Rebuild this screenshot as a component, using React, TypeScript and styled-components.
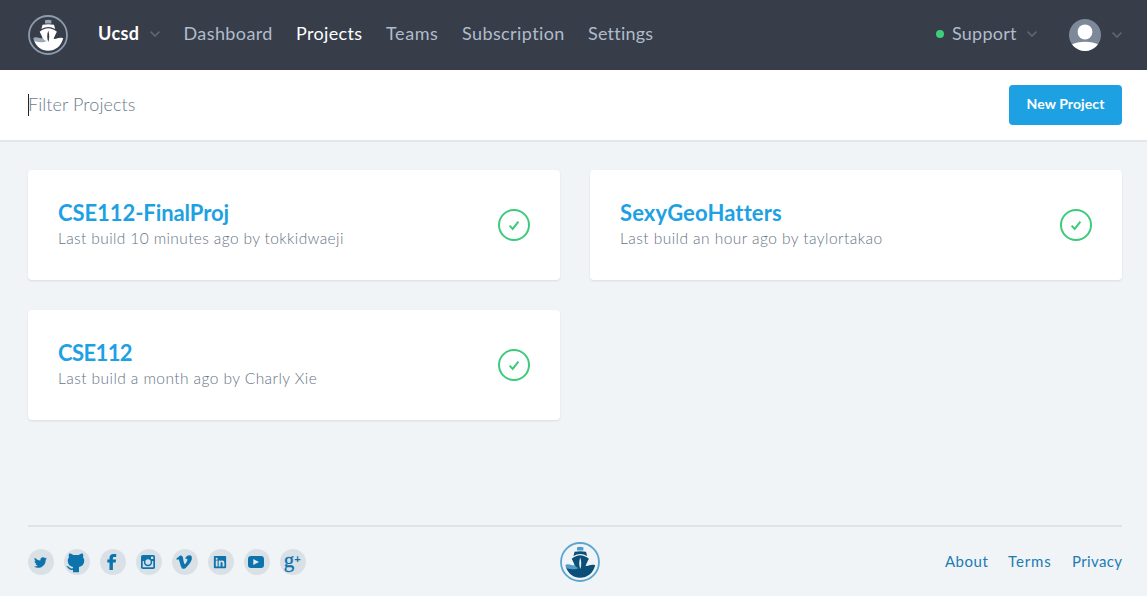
import React from "react";
import styled, { createGlobalStyle } from "styled-components";
import { FaTwitter, FaVimeoV, FaLinkedin } from "react-icons/fa";

const GlobalStyle = createGlobalStyle`
  *, *::before, *::after { box-sizing: border-box; }
  body {
    margin: 0;
    background: #f0f4f7;
    font-family: Lato, "Open Sans", sans-serif;
    -webkit-font-smoothing: antialiased;
  }
`;

const Page = styled.div`
  height: 596px;
  display: flex;
  flex-direction: column;
`;

const Header = styled.header`
  height: 70px;
  flex: none;
  display: flex;
  align-items: center;
  padding: 0 25px 0 28px;
  background: #373d49;
`;

const Nav = styled.nav`
  display: flex;
  align-items: center;
  gap: 24px;
  margin-left: 30px;
  padding-bottom: 2px;
`;

const NavItem = styled.a<{ $w: number; $track?: number; $tone?: "bold" | "active" }>`
  width: ${(p) => p.$w}px;
  padding-bottom: 2px;
  white-space: nowrap;
  font-size: 18px;
  line-height: 24px;
  letter-spacing: ${(p) => p.$track ?? 0}px;
  font-weight: ${(p) => (p.$tone === "bold" ? 700 : 400)};
  color: ${(p) => (p.$tone ? "#ffffff" : "#b0bccb")};
`;

const Menu = styled.div`
  display: flex;
  align-items: center;
  gap: 10px;
`;

const Account = styled.div`
  display: flex;
  align-items: center;
  margin-left: auto;
  gap: 32px;
`;

const SupportMenu = styled(Menu)`
  padding-bottom: 2px;
`;

const AvatarMenu = styled(Menu)`
  gap: 11px;
`;

const StatusDot = styled.span`
  width: 8px;
  height: 8px;
  margin-right: -2px;
  border-radius: 50%;
  background: #3dce7c;
`;

const FilterBar = styled.section`
  height: 72px;
  flex: none;
  display: flex;
  align-items: center;
  justify-content: space-between;
  padding: 0 25px 0 28px;
  background: #ffffff;
  border-bottom: 2px solid #e3e5e7;
`;

const FilterField = styled.div`
  height: 22px;
  border-left: 1px solid #20242c;
  font-size: 18px;
  line-height: 21px;
  font-weight: 300;
  letter-spacing: 0.08px;
  text-indent: -1px;
  color: #6c7a8c;
`;

const PrimaryButton = styled.button`
  width: 113px;
  height: 40px;
  padding: 0 0 2px;
  border: 0;
  border-radius: 4px;
  background: #1ea1e3;
  color: #ffffff;
  font: 700 14px/20px Lato, sans-serif;
  letter-spacing: 0.1px;
`;

const Grid = styled.main`
  flex: 1;
  display: grid;
  grid-template-columns: 532px 532px;
  grid-auto-rows: 110px;
  gap: 30px;
  padding: 28px 25px 0 28px;
`;

const Card = styled.article`
  display: flex;
  align-items: center;
  justify-content: space-between;
  padding: 0 30px;
  border-radius: 4px;
  background: #ffffff;
  box-shadow: 0 1px 2px rgba(40, 60, 80, 0.12);
`;

const Title = styled.h2<{ $track: number }>`
  margin: 2px 0 0;
  font-size: 22px;
  line-height: 28px;
  font-weight: 700;
  letter-spacing: ${(p) => p.$track}px;
  color: #1ea1e3;
`;

const Meta = styled.p<{ $track: number }>`
  margin: -1px 0 3px;
  font-size: 15.5px;
  line-height: 24px;
  font-weight: 300;
  letter-spacing: ${(p) => p.$track}px;
  color: #667486;
`;

const Footer = styled.footer`
  height: 71px;
  flex: none;
  display: grid;
  grid-template-columns: 532px 40px 1fr;
  align-items: center;
  margin: 0 25px 0 28px;
  border-top: 2px solid #dce3e9;
`;

const SocialList = styled.div`
  display: flex;
  gap: 10px;
  margin-bottom: -1px;
`;

const SocialLink = styled.a`
  width: 26px;
  height: 26px;
  display: flex;
  align-items: center;
  justify-content: center;
  padding-right: 1.5px;
  border-radius: 50%;
  background: #d9e1e7;
  color: #0d73ad;
`;

const GooglePlus = styled.span`
  display: flex;
  font: 21px/20px "Liberation Serif", serif;
  padding-bottom: 5px;
  -webkit-text-stroke: 0.3px currentColor;
  sup {
    font: 700 11px/10px "Liberation Sans", sans-serif;
    margin-top: 4px;
    -webkit-text-stroke: 0;
  }
`;

const FooterLinks = styled.div`
  display: flex;
  justify-content: flex-end;
  gap: 20px;
  padding-bottom: 2px;
`;

const FooterLink = styled.a<{ $w: number; $track: number }>`
  width: ${(p) => p.$w}px;
  white-space: nowrap;
  font-size: 15px;
  line-height: 20px;
  letter-spacing: ${(p) => p.$track}px;
  color: #1c7cb2;
`;

const Chevron = () => (
  <svg width="10" height="6" viewBox="0 0 10 6" fill="none" stroke="#5d6673" strokeWidth="1.7">
    <path d="M.6.6 5 5 9.4.6" />
  </svg>
);

type LogoProps = { ring: string; back: string; hull: string; wave: string; inner: string };

const Logo = ({ ring, back, hull, wave, inner }: LogoProps) => (
  <svg width="40" height="40" viewBox="0 0 40 40">
    <circle cx="20" cy="20" r="19" fill={inner} stroke={ring} strokeWidth="1.8" />
    <path d="M17 5.2q3.200-.8 6.400 0v3.400H17z" fill={wave} />
    <path d="M14.600 9.800q5.700-1.300 11.400 0l1.200 4.200q-6.900-3.900-13.800 0z" fill={hull} />
    <path d="M20.200 13.200c3 0 6 1.400 8.700 3.500-1.300 2.600-2.300 4.600-3.300 7.200 3.200.6 4.800-2 9.600-.7C33.200 31 27.500 35.700 20 35.700c-6.500 0-11.300-3.700-13.700-9.700 3.600.3 6.500.2 8.700-1.600-.8-2.800-1.900-5.100-3.300-7.700 2.700-2.100 5.500-3.500 8.500-3.500z" fill={hull} />
    <path d="M5.300 22.900c3.400-1.800 6 .9 9.700.4 1 1.800 2.400 2.400 3.900 2.700-4.200 2.400-8.700.8-12.700.3z" fill={wave} />
    <path d="M20.300 15.400c1.300 3.600 1.200 8.400 0 11.600-1.400-3.600-1.500-7.800 0-11.600z" fill={back} />
  </svg>
);

const StatusOk = () => (
  <svg width="32" height="32" viewBox="0 0 32 32" fill="none" stroke="#3dcb7b" strokeWidth="2">
    <circle cx="16" cy="16" r="15" />
    <path d="m11.600 16.600 3.100 3.300 5.700-7.300" />
  </svg>
);

const Avatar = () => (
  <svg width="32" height="32" viewBox="0 0 32 32">
    <defs>
      <clipPath id="avatar-round">
        <circle cx="16" cy="16" r="16" />
      </clipPath>
    </defs>
    <g clipPath="url(#avatar-round)">
      <rect width="32" height="32" fill="#7d8998" />
      <ellipse cx="16" cy="12.900" rx="7.400" ry="7.500" fill="#fff" />
      <path d="M2 26q6-3.200 14-3.200T30 26v6H2z" fill="#fff" />
    </g>
  </svg>
);

const Octocat = () => (
  <svg width="20" height="24" viewBox="0 -3 20 24" fill="currentColor">
    <path d="M3.200.6c1.600 0 3 .6 4.200 1.500 1.700-.3 3.500-.3 5.200 0C13.800 1.200 15.200.6 16.800.6c.6 1.300.6 2.500.2 3.700 1 1.200 1.400 2.500 1.200 4.300-.3 3.200-2.200 4.800-5.200 5.300v5.300H7v-2.400c-2.600.6-4.100-.4-5-2l-1.400-1 .3-.8c2.600.3 2.500 2.400 4.600 2.400l1.500-.2v-1.300c-3-.5-4.900-2.100-5.200-5.300-.2-1.800.2-3.100 1.200-4.300C2.600 3.100 2.600 1.900 3.200.6z" />
  </svg>
);

const Facebook = () => (
  <svg width="11" height="16" viewBox="0 0 11 16" fill="currentColor">
    <path d="M2.500 16V8.600H.3V5.500h2.200V4C2.500 1.300 4 0 6.500 0h2.700v3H7.500C6.300 3 5.900 3.500 5.900 4.400v1.100h3.200l-.4 3.100H5.900V16z" />
  </svg>
);

const Instagram = () => (
  <svg width="14" height="14" viewBox="0 0 14 14">
    <rect width="14" height="14" rx="1.800" fill="currentColor" />
    <path d="M1.700 6v6.200h10.600V6h-1.400a4 4 0 1 1-7.800 0z" fill="#d9e1e7" />
    <circle cx="7" cy="7" r="4.200" fill="currentColor" />
    <rect x="10" y="1.700" width="2.300" height="2.300" fill="#d9e1e7" />
    <circle cx="7" cy="7" r="2.700" fill="#d9e1e7" />
  </svg>
);

const YouTube = () => (
  <svg width="16" height="12" viewBox="0 0 16 12">
    <rect width="16" height="12" rx="3" fill="currentColor" />
    <path d="m5.300 3.100 5.700 2.900-5.700 2.900z" fill="#e4ebef" />
  </svg>
);

const navigation = [
  { label: "Dashboard", w: 88.5, track: 0.4 },
  { label: "Projects", w: 66, track: 0.35, active: true },
  { label: "Teams", w: 52, track: 0.6 },
  { label: "Subscription", w: 102, track: 0.4 },
  { label: "Settings", w: 66, track: 0.22 },
];

const projects = [
  { name: "CSE112-FinalProj", track: -0.07, meta: "Last build 10 minutes ago by tokkidwaeji", metaTrack: 0.38 },
  { name: "SexyGeoHatters", track: 0.12, meta: "Last build an hour ago by taylortakao", metaTrack: 0.45 },
  { name: "CSE112", track: -0.6, meta: "Last build a month ago by Charly Xie", metaTrack: 0.43 },
];

const social = [
  { name: "Twitter", icon: <FaTwitter size={13} /> },
  { name: "GitHub", icon: <Octocat /> },
  { name: "Facebook", icon: <Facebook /> },
  { name: "Instagram", icon: <Instagram /> },
  { name: "Vimeo", icon: <FaVimeoV size={18} /> },
  { name: "LinkedIn", icon: <FaLinkedin size={14} /> },
  { name: "YouTube", icon: <YouTube /> },
  { name: "Google Plus", icon: <GooglePlus>g<sup>+</sup></GooglePlus> },
];

export default function App() {
  return (
    <Page>
      <GlobalStyle />
      <Header>
        <Logo ring="#8d9bae" back="#373d49" hull="#ffffff" wave="#9ba8ba" inner="#373d49" />
        <Nav>
          <Menu>
            <NavItem $w={41.5} $track={0.35} $tone="bold">Ucsd</NavItem>
            <Chevron />
          </Menu>
          {navigation.map((n) => (
            <NavItem key={n.label} $w={n.w} $track={n.track} $tone={n.active ? "active" : undefined}>
              {n.label}
            </NavItem>
          ))}
        </Nav>
        <Account>
          <SupportMenu>
            <StatusDot />
            <NavItem $w={65} $track={0.25}>Support</NavItem>
            <Chevron />
          </SupportMenu>
          <AvatarMenu>
            <Avatar />
            <Chevron />
          </AvatarMenu>
        </Account>
      </Header>
      <FilterBar>
        <FilterField>Filter Projects</FilterField>
        <PrimaryButton>New Project</PrimaryButton>
      </FilterBar>
      <Grid>
        {projects.map((p) => (
          <Card key={p.name}>
            <div>
              <Title $track={p.track}>{p.name}</Title>
              <Meta $track={p.metaTrack}>{p.meta}</Meta>
            </div>
            <StatusOk />
          </Card>
        ))}
      </Grid>
      <Footer>
        <SocialList>
          {social.map((s) => (
            <SocialLink key={s.name}>{s.icon}</SocialLink>
          ))}
        </SocialList>
        <Logo ring="#5ba6cf" back="#e4edf3" hull="#0b4f78" wave="#4f9dc8" inner="#f0f4f7" />
        <FooterLinks>
          <FooterLink $w={43} $track={0.5}>About</FooterLink>
          <FooterLink $w={44} $track={0.9}>Terms</FooterLink>
          <FooterLink $w={50} $track={0.35}>Privacy</FooterLink>
        </FooterLinks>
      </Footer>
    </Page>
  );
}
